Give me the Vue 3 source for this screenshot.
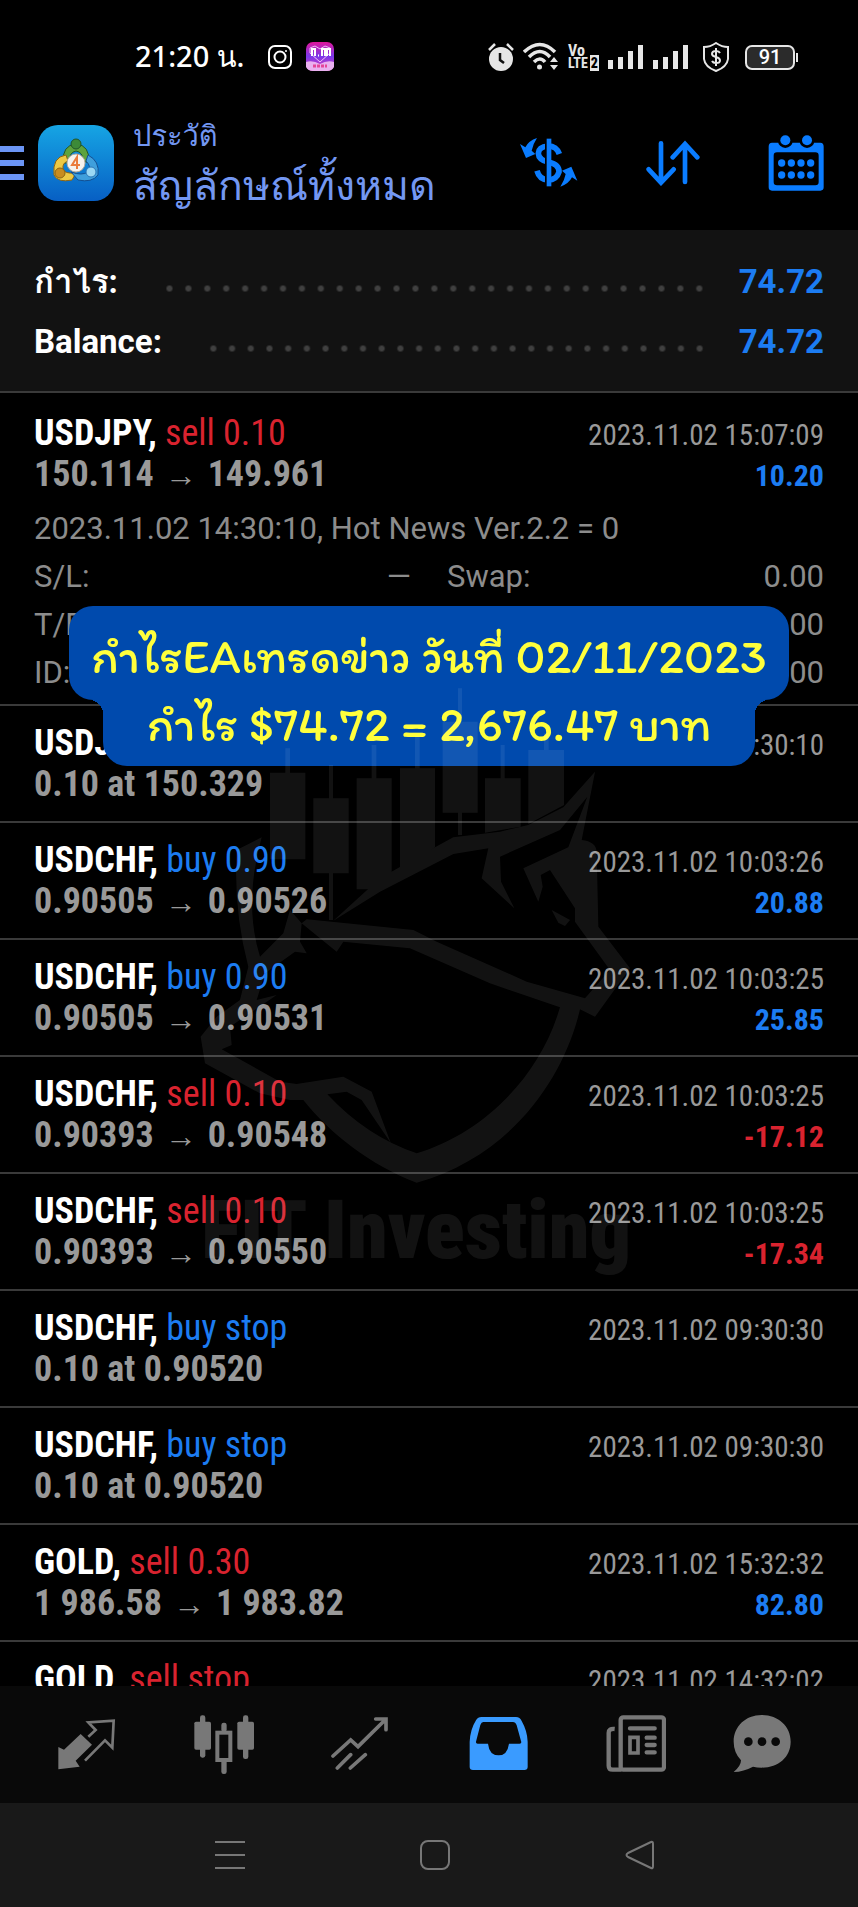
<template>
  <div class="screen">
    <div class="status-bar">
      <span class="clock">21:20 น.</span>
      <svg class="notif-instagram" width="26" height="26" viewBox="0 0 26 26" fill="none" stroke="#fff" stroke-width="2">
        <rect x="2" y="2" width="22" height="22" rx="6" />
        <circle cx="13" cy="13" r="5.5" />
        <circle cx="19" cy="7" r="1" fill="#fff" stroke="none" />
      </svg>
      <svg class="notif-shop" width="30" height="30" viewBox="0 0 30 30">
        <defs>
          <linearGradient id="shop" x1="0" y1="0" x2="0" y2="1">
            <stop offset="0" stop-color="#e0169c" />
            <stop offset="0.5" stop-color="#7a38ea" />
            <stop offset="1" stop-color="#e63bb4" />
          </linearGradient>
        </defs>
        <rect x="1" y="0" width="28" height="29" rx="7" fill="url(#shop)" />
        <path d="M15 20L5 11V6L10 4L15 7L20 4L25 6V11Z" fill="none" stroke="#f3b9f5" stroke-width="1" />
        <path d="M7 14V7H10V14M17 14V7H20V14M22 14V7H25V14M13 13.500H14" fill="none" stroke="#fff" stroke-width="2" />
        <path d="M1 20Q8 18 15 22Q22 18 29 20V25Q27 29 22 29H8Q3 29 1 25Z" fill="#e9b0f0" />
        <path d="M8 24H22" stroke="#e5459a" stroke-width="3" stroke-dasharray="3 1" />
      </svg>
      <div class="status-icons">
        <svg width="26" height="30" viewBox="0 0 26 30">
          <path d="M1 8L7 2M25 8L19 2" stroke="#e6e6e6" stroke-width="2.500" />
          <circle cx="13" cy="17" r="12" fill="#e6e6e6" />
          <path d="M12 11V18L16 21" fill="none" stroke="#111" stroke-width="2.500" />
        </svg>
        <svg width="36" height="30" viewBox="0 0 36 30" fill="none" stroke="#e6e6e6" stroke-width="3.500">
          <path d="M1 10Q17 -5 32 10M6 15Q17 4 27 15M11 20Q17 14 22 20" />
          <circle cx="16.500" cy="25" r="2.500" fill="#e6e6e6" stroke="none" />
          <path d="M27 20L31 15L35 20ZM27 23L31 28L35 23Z" fill="#e6e6e6" stroke="none" />
        </svg>
        <span class="volte">
          <span class="volte-top">Vo</span>
          <span>LTE<b>2</b></span>
        </span>
        <svg v-for="n in 2" :key="n" width="36" height="26" viewBox="0 0 36 26" fill="#e6e6e6">
          <rect x="0" y="16" width="5" height="9" />
          <rect x="10" y="13" width="5" height="12" />
          <rect x="20" y="7" width="5" height="18" />
          <rect x="30" y="1" width="5" height="24" />
        </svg>
        <svg class="shield" width="28" height="30" viewBox="0 0 28 30" fill="none" stroke="#e6e6e6" stroke-width="2">
          <path d="M14 1Q20 5 26 5V17Q25 25 14 29Q3 25 2 17V5Q8 5 14 1Z" />
          <path d="M18 11Q17 9 14 9Q10 9 10 12Q10 14 14 15Q18 16 18 18.500Q18 21 14 21Q11 21 10 19M14 6V24" />
        </svg>
        <span class="battery">91</span>
      </div>
    </div>

    <header class="header">
      <button class="menu-button" aria-label="Menu"><i></i><i></i><i></i></button>
      <svg class="logo" width="76" height="76" viewBox="0 0 76 76">
        <defs>
          <linearGradient id="logoBg" x1="0" y1="0" x2="0" y2="1">
            <stop offset="0" stop-color="#16a5e4" />
            <stop offset="1" stop-color="#075fc4" />
          </linearGradient>
        </defs>
        <rect width="76" height="76" rx="20" fill="url(#logoBg)" />
        <path d="M25 38Q24 20 38 19Q52 20 51 38L45 36Q45 27 38 26Q31 27 31 38Z" fill="#5da33d" stroke="#21552a" />
        <path d="M28 30Q14 32 16 50Q20 58 34 55L38 48Q26 49 25 44Q24 38 30 36Z" fill="#edc944" stroke="#8d6413" />
        <path d="M50 30Q62 36 60 50Q54 58 40 55L33 47Q44 51 50 47Q54 42 48 36Z" fill="#3f9fdc" stroke="#124f92" />
        <circle cx="38" cy="19" r="5" fill="#3c8a38" stroke="#21552a" />
        <circle cx="22" cy="48" r="5" fill="#c88c20" stroke="#8d6413" />
        <circle cx="53" cy="47" r="5" fill="#9bd8f4" stroke="#2a77b8" />
        <circle cx="38" cy="38" r="9" fill="#f5f2ed" stroke="#b7ac9d" />
        <path d="M39 44V32L34 40H42" fill="none" stroke="#ea7c3c" stroke-width="2" />
      </svg>
      <div class="title">
        <h1>ประวัติ</h1>
        <p>สัญลักษณ์ทั้งหมด</p>
      </div>
      <div class="header-actions">
        <button aria-label="Deals">
          <svg width="58" height="52" viewBox="268 355 174 156" fill="none" stroke="#0a7cff">
            <path d="M386 406Q378 382 352 382Q324 384 323 404Q324 424 354 431Q386 438 385 460Q378 484 352 484Q326 482 319 456" stroke-width="17" />
            <path d="M346 364V500" stroke="#000" stroke-width="6" />
            <path d="M355 360V503" stroke-width="14" />
            <g fill="#0a7cff" stroke="none">
              <path id="swap" d="M319 358Q306 378 303 396L314 406L286 418L268 376L284 386Q294 366 319 358Z" />
              <use href="#swap" transform="rotate(180 354 431)" />
            </g>
          </svg>
        </button>
        <button aria-label="Sort">
          <svg width="54" height="46" viewBox="645 362 162 138" fill="none" stroke="#0a7cff" stroke-width="14" stroke-linecap="round">
            <path d="M690 372V488M653 450L690 490L728 450M762 488V376M725 414L762 374L799 414" />
          </svg>
        </button>
        <button aria-label="Period">
          <svg width="56" height="57" viewBox="1010 343 168 171" fill="#0a7cff">
            <path fill-rule="evenodd" d="M1022 366H1167Q1177 366 1177 378V500Q1177 510 1167 510H1022Q1012 510 1012 500V378Q1012 366 1022 366ZM1037 395Q1027 395 1027 405V484Q1027 494 1037 494H1152Q1162 494 1162 484V405Q1162 395 1152 395Z" />
            <g v-for="x in [1062, 1127]" :key="x">
              <circle :cx="x" cy="360" r="22" fill="#000" />
              <circle :cx="x" cy="359" r="15" />
            </g>
            <g v-for="x in [1051, 1080, 1109, 1138]" :key="x">
              <circle :cx="x" cy="427" r="11" />
              <circle :cx="x" cy="463" r="11" />
            </g>
          </svg>
        </button>
      </div>
    </header>

    <section class="summary">
      <div v-for="item in summary" :key="item.label" class="summary-row">
        <span>{{ item.label }}</span>
        <span class="leader"></span>
        <span class="summary-value">{{ item.value }}</span>
      </div>
    </section>

    <main class="deals">
      <article v-for="(deal, index) in deals" :key="index" class="deal">
        <div class="deal-line">
          <span class="deal-title">
            <b>{{ deal.symbol }},</b>
            <span :class="getTypeClass(deal.type)">{{ ' ' + deal.type }}</span>
          </span>
          <time>{{ deal.time }}</time>
        </div>
        <div class="deal-line">
          <span v-if="deal.close" class="deal-price">{{ deal.open }}<span class="arrow">→</span>{{ deal.close }}</span>
          <span v-else class="deal-price">{{ deal.open }}</span>
          <span v-if="deal.profit" class="deal-profit" :class="deal.profit.startsWith('-') ? 'sell' : 'buy'">{{ deal.profit }}</span>
        </div>
        <div v-if="deal.comment" class="deal-details">
          <p>{{ deal.comment }}</p>
          <dl>
            <div v-for="(detail, i) in deal.details" :key="i">
              <dt>{{ detail.label }}</dt>
              <dd>{{ detail.value }}</dd>
            </div>
          </dl>
        </div>
      </article>
    </main>

    <nav class="tab-bar">
      <button aria-label="Trade">
        <svg width="60" height="60" viewBox="174 222 180 180" fill="none" stroke="#787878" stroke-width="8">
          <path d="M178 385V318L195 326L245 279L279 311L230 359L242 377Z" fill="#787878" stroke="none" />
          <path d="M268 287L290 267L268 244L344 239L340 320L318 298L258 359" />
        </svg>
      </button>
      <button aria-label="Quotes">
        <svg width="60" height="60" viewBox="581 222 180 180" fill="#787878">
          <rect x="582" y="242" width="50" height="84" rx="5" />
          <rect x="599" y="223" width="16" height="127" rx="7" />
          <rect x="711" y="242" width="50" height="84" rx="5" />
          <rect x="728" y="223" width="16" height="131" rx="7" />
          <rect x="663" y="245" width="16" height="28" rx="7" />
          <rect x="663" y="355" width="16" height="44" rx="7" />
          <rect x="651" y="275" width="39" height="82" fill="none" stroke="#787878" stroke-width="12" />
        </svg>
      </button>
      <button aria-label="Charts">
        <svg width="60" height="60" viewBox="996 222 180 180" fill="none" stroke="#787878" stroke-width="11" stroke-linecap="round">
          <path d="M1002 345L1055 297L1077 317L1158 237M1130 234H1161V266M1015 381L1055 341M1054 381L1099 341" />
        </svg>
      </button>
      <button aria-label="History">
        <svg width="60" height="60" viewBox="115 222 180 180" fill="#3a9bff">
          <path fill-rule="evenodd" d="M152 228H256Q268 228 273 240Q290 270 291 302V378Q291 387 281 387H127Q117 387 117 378V302Q119 265 136 238Q142 228 152 228ZM158 243Q152 243 149 252L136 302Q135 308 141 308H172Q176 343 204 343Q230 343 235 308H267Q274 308 271 300L258 253Q254 243 247 243Z" />
        </svg>
      </button>
      <button aria-label="News">
        <svg width="60" height="60" viewBox="526 222 180 180" fill="none" stroke="#787878" stroke-width="13">
          <rect x="570" y="229" width="130" height="157" rx="8" />
          <path d="M552 264Q534 262 534 276V374Q534 386 546 386H572" />
          <path d="M598 262H672M648 290H672M648 312H672M648 334H672" stroke-linecap="round" />
          <path d="M598 289H622V336H598Z" stroke-width="11" />
        </svg>
      </button>
      <button aria-label="Chat">
        <svg width="60" height="60" viewBox="906 222 180 180">
          <path d="M992 222C1042 222 1079 256 1079 302C1079 348 1042 380 992 380Q978 380 966 377Q938 392 908 393Q930 375 930 358Q908 334 908 302C908 256 944 222 992 222Z" fill="#787878" />
          <circle v-for="x in [952, 993, 1034]" :key="x" :cx="x" cy="302" r="13" fill="#090909" />
        </svg>
      </button>
    </nav>

    <nav class="system-bar">
      <button aria-label="Recent apps">
        <svg width="30" height="30" viewBox="0 0 30 30" stroke="#777" stroke-width="2"><path d="M0 2H30M0 15H30M0 28H30" /></svg>
      </button>
      <button aria-label="Home">
        <svg width="30" height="30" viewBox="0 0 30 30" fill="none" stroke="#777" stroke-width="2"><rect x="1" y="1" width="28" height="28" rx="7" /></svg>
      </button>
      <button aria-label="Back">
        <svg width="30" height="30" viewBox="0 0 30 30" fill="none" stroke="#777" stroke-width="2" stroke-linejoin="round"><path d="M26 2Q28 1 28 4V26Q28 29 26 28L3 17Q0 15 3 13Z" /></svg>
      </button>
    </nav>

    <div class="banner">
      <p class="banner-first">กำไรEAเทรดข่าว วันที่ 02/11/2023</p>
      <p class="banner-second">กำไร $74.72 = 2,676.47 บาท</p>
    </div>

    <svg class="watermark" width="432" height="600" viewBox="60 -240 1296 1800" fill="#fff" aria-hidden="true">
      <path d="M270 38H316V-35H330V38H376V298H270ZM400 115H447V15H459V115H506V340H459V480H447V340H400ZM530 55H575V-45H589V55H635V355L590 388H530ZM660 25H705V-72H719V25H765V262L660 335ZM788 -115H834V-215H846V-115H893V158H846V225H834V158H788ZM915 55H962V-45H974V55H1022V200L915 218ZM1045 -30H1092V-80H1106V-30H1152V135L1045 192Z" />
      <path d="M460 482L600 355L765 262L820 232L960 215L1045 195L1150 142L1245 35L1205 240Q1248 245 1250 275L1255 500L1350 625L1245 770L1200 748C1150 960 990 1190 710 1268C570 1215 450 1120 370 1020L330 1020L240 1000L75 910L62 830L110 770L180 720L205 620Q160 450 170 270L245 232Q190 430 240 590L310 520L330 450L365 490L360 545L380 580L345 575L255 640L230 720L290 705L150 800L155 855L125 868L300 965L350 972L490 950L575 995L632 1148L545 1020L500 995L442 1003Q560 1130 710 1180C910 1120 1080 950 1140 742L930 670L690 565L490 545L470 575L365 490L380 478L700 510L770 545L1040 665L1215 715L1290 630L1185 485L1185 445L1110 330L1082 345L1088 380L1075 425L1030 325L1165 262L1222 110L1140 210L960 290L963 365L1003 445L905 355L925 265L820 282L600 395Z" />
      <path d="M1115 450L1170 480L1155 498L1135 488Z" />
      <text x="64" y="1494">FIT Investing</text>
    </svg>
  </div>
</template>

<script setup>
const summary = [
  { label: 'กำไร:', value: '74.72' },
  { label: 'Balance:', value: '74.72' }
];

const deals = [
  {
    symbol: 'USDJPY',
    type: 'sell 0.10',
    time: '2023.11.02 15:07:09',
    open: '150.114',
    close: '149.961',
    profit: '10.20',
    comment: '2023.11.02 14:30:10, Hot News Ver.2.2 = 0',
    details: [
      { label: 'S/L:', value: '—' },
      { label: 'Swap:', value: '0.00' },
      { label: 'T/P:', value: '' },
      { label: '', value: '0.00' },
      { label: 'ID:', value: '' },
      { label: '', value: '0.00' }
    ]
  },
  { symbol: 'USDJPY', type: '', time: '2023.11.02 14:30:10', open: '0.10 at 150.329' },
  { symbol: 'USDCHF', type: 'buy 0.90', time: '2023.11.02 10:03:26', open: '0.90505', close: '0.90526', profit: '20.88' },
  { symbol: 'USDCHF', type: 'buy 0.90', time: '2023.11.02 10:03:25', open: '0.90505', close: '0.90531', profit: '25.85' },
  { symbol: 'USDCHF', type: 'sell 0.10', time: '2023.11.02 10:03:25', open: '0.90393', close: '0.90548', profit: '-17.12' },
  { symbol: 'USDCHF', type: 'sell 0.10', time: '2023.11.02 10:03:25', open: '0.90393', close: '0.90550', profit: '-17.34' },
  { symbol: 'USDCHF', type: 'buy stop', time: '2023.11.02 09:30:30', open: '0.10 at 0.90520' },
  { symbol: 'USDCHF', type: 'buy stop', time: '2023.11.02 09:30:30', open: '0.10 at 0.90520' },
  { symbol: 'GOLD', type: 'sell 0.30', time: '2023.11.02 15:32:32', open: '1 986.58', close: '1 983.82', profit: '82.80' },
  { symbol: 'GOLD', type: 'sell stop', time: '2023.11.02 14:32:02', open: '' }
];

const getTypeClass = (type) => (type.startsWith('buy') ? 'buy' : 'sell');
</script>

<style>
body {
  background: #000;
}
</style>

<style scoped>
.screen {
  position: relative;
  display: flex;
  flex-direction: column;
  height: 100vh;
  overflow: hidden;
  background: #000;
  color: #fff;
  font-family: Roboto, Loma, sans-serif;
}

p,
h1,
dl,
dd {
  margin: 0;
}

button {
  display: flex;
  padding: 0;
  border: none;
  background: none;
  cursor: pointer;
}

svg {
  display: block;
}

.status-bar {
  display: flex;
  align-items: center;
  flex-shrink: 0;
  height: 42px;
  padding: 36px 59px 0 135px;
}

.clock {
  font-family: "Noto Sans", Loma, sans-serif;
  font-size: 29px;
  font-weight: 500;
  white-space: nowrap;
}

.notif-instagram {
  margin-left: 22px;
}

.notif-shop {
  margin-left: 12px;
}

.status-icons {
  display: flex;
  align-items: center;
  gap: 9px;
  margin-left: auto;
}

.volte {
  display: flex;
  flex-direction: column;
  font-family: "Roboto Condensed", sans-serif;
  font-size: 14px;
  font-weight: 700;
  line-height: 13px;
  color: #e6e6e6;
}

.volte-top {
  font-size: 16px;
}

.volte b {
  margin-left: 2px;
  padding: 0 1px;
  background: #e6e6e6;
  color: #000;
}

.shield {
  margin-left: 4px;
}

.battery {
  position: relative;
  box-sizing: border-box;
  width: 50px;
  height: 25px;
  margin: 0 4px 0 6px;
  border: 2px solid #e6e6e6;
  border-radius: 7px;
  background: #2b2b2b;
  font-size: 20px;
  font-weight: 500;
  line-height: 21px;
  text-align: center;
}

.battery::after {
  content: "";
  position: absolute;
  top: 6px;
  right: -5px;
  width: 2px;
  height: 9px;
  background: #e6e6e6;
}

.header {
  display: flex;
  align-items: center;
  flex-shrink: 0;
  height: 76px;
  padding: 47px 34px 29px 0;
  color: #7397f2;
}

.menu-button {
  flex-direction: column;
  gap: 8px;
  width: 24px;
}

.menu-button i {
  height: 6px;
  background: #6b95f5;
}

.logo {
  margin: 0 19px 0 14px;
}

.title {
  white-space: nowrap;
  font-family: Loma, sans-serif;
}

.title h1 {
  font-size: 29px;
  font-weight: 400;
  line-height: 46px;
}

.title p {
  font-size: 41px;
  line-height: 54px;
}

.header-actions {
  display: flex;
  align-items: center;
  gap: 68px;
  margin-left: auto;
}

.summary {
  flex-shrink: 0;
  padding: 22px 34px 19px;
  border-bottom: 2px solid #3a3a3a;
  background: #121212;
}

.summary-row {
  display: flex;
  align-items: center;
  height: 60px;
  font-size: 33px;
  font-weight: 700;
  line-height: 60px;
}

.summary-value,
.buy {
  color: #1c7cf2;
}

.sell {
  color: #d9232f;
}

.leader {
  flex: 1;
  height: 7px;
  margin: 13px 30px 0 42px;
  background: radial-gradient(circle, #404040 2px, transparent 4px) 0 0 / 19px 7px round;
}

.deals {
  flex: 1 1 0;
  min-height: 0;
  overflow: hidden;
  font-family: "Roboto Condensed", Roboto, sans-serif;
}

.deal {
  padding: 17px 34px 16px;
  border-bottom: 2px solid #3a3a3a;
}

.deal:first-child {
  padding: 20px 34px 7px;
}

.deal-line {
  display: flex;
  justify-content: space-between;
  align-items: baseline;
  height: 41px;
  line-height: 41px;
  white-space: nowrap;
}

.deal-title,
.deal-price {
  font-size: 36px;
}

.deal-price {
  font-weight: 700;
  color: #999;
}

.arrow {
  margin: 0 11px;
  font-family: "Liberation Sans", sans-serif;
  font-size: 32px;
  font-weight: 400;
}

.deal-line time {
  font-size: 29px;
  color: #999;
}

.deal-profit {
  font-size: 30px;
  font-weight: 700;
}

.deal-details {
  margin-top: 10px;
  font-family: Roboto, sans-serif;
  font-size: 31px;
  line-height: 48px;
  color: #8c8c8c;
}

.deal-details dl {
  display: grid;
  grid-template-columns: 1fr 1fr;
  column-gap: 36px;
}

.deal-details dl div {
  display: flex;
  justify-content: space-between;
}

.tab-bar {
  display: grid;
  grid-template-columns: 137fr 137fr 137fr 137fr 127fr 125fr;
  align-items: center;
  flex-shrink: 0;
  height: 117px;
  padding-left: 57px;
  background: #090909;
}

.system-bar {
  display: flex;
  align-items: center;
  justify-content: center;
  flex-shrink: 0;
  gap: 175px;
  height: 104px;
  padding-left: 12px;
  background: #191919;
}

.banner {
  position: absolute;
  top: 606px;
  left: 0;
  right: 0;
  display: flex;
  flex-direction: column;
  align-items: center;
  font-family: Itim, Mali, Sriracha, "Patrick Hand", Loma, sans-serif;
  font-size: 49px;
  font-weight: 400;
  color: #ffff3c;
  text-align: center;
  white-space: nowrap;
}

.banner-first {
  width: 84%;
  height: 94px;
  border-radius: 24px;
  background: #004aad;
  line-height: 100px;
}

.banner-second {
  position: relative;
  width: 76%;
  height: 66px;
  border-radius: 0 0 24px 24px;
  background: #004aad;
  line-height: 48px;
}

.banner-second::before,
.banner-second::after {
  content: "";
  position: absolute;
  top: 0;
  width: 14px;
  height: 14px;
}

.banner-second::before {
  right: 100%;
  background: radial-gradient(circle at 0 100%, transparent 14px, #004aad 14px);
}

.banner-second::after {
  left: 100%;
  background: radial-gradient(circle at 100% 100%, transparent 14px, #004aad 14px);
}

.watermark {
  position: absolute;
  top: 680px;
  left: 50%;
  margin-left: -229px;
  opacity: 0.07;
  pointer-events: none;
}

.watermark text {
  font-family: "Roboto Condensed", sans-serif;
  font-size: 246px;
  font-weight: 900;
}
</style>
